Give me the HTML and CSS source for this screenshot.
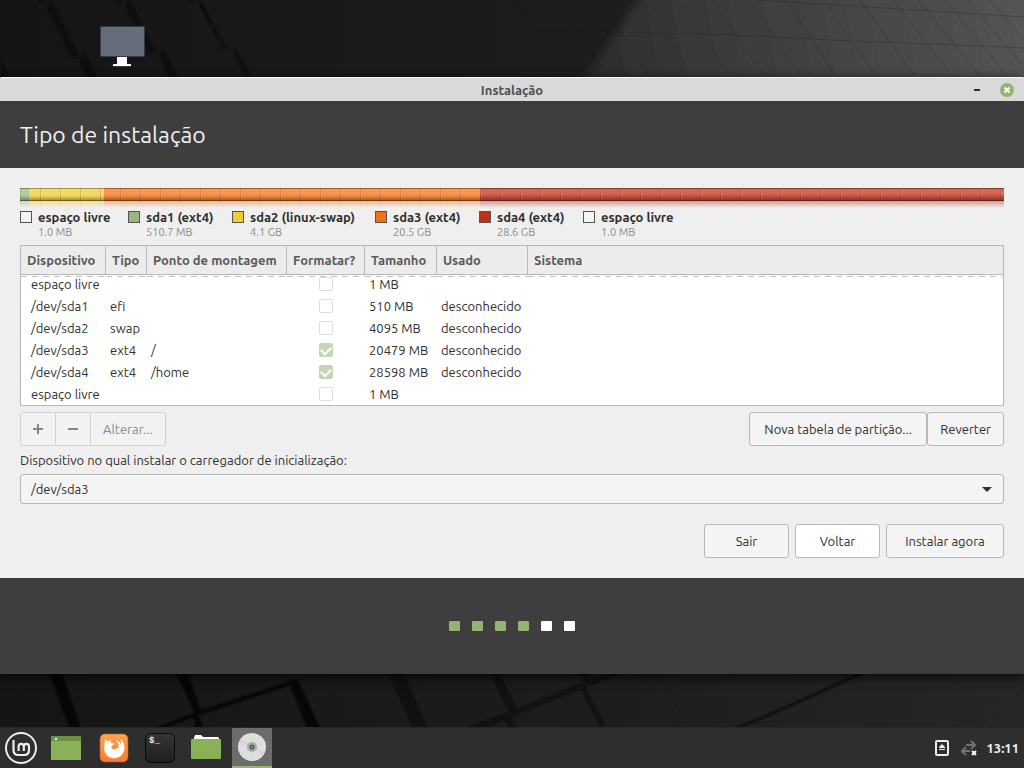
FILE: index.html
```html
<!DOCTYPE html>
<html lang="pt-BR">
<head>
<meta charset="utf-8">
<meta name="viewport" content="width=device-width, initial-scale=1">
<title>Instalação</title>
<link rel="stylesheet" href="styles.css">
</head>
<body>
<div class="desktop">
  <svg class="wallpaper" viewBox="0 0 1024 727" preserveAspectRatio="xMidYMid slice" aria-hidden="true">
    <defs>
      <linearGradient id="dark"><stop offset="0" stop-color="#151515"/><stop offset=".6" stop-color="#1d1d1d"/><stop offset="1" stop-color="#262626"/></linearGradient>
      <linearGradient id="light" x1="590" y1="77" x2="1024" y2="0" gradientUnits="userSpaceOnUse"><stop offset="0" stop-color="#2b2b2b"/><stop offset=".2" stop-color="#363636"/><stop offset="1" stop-color="#555"/></linearGradient>
      <filter id="soft"><feGaussianBlur stdDeviation="4"/></filter>
      <filter id="edge"><feGaussianBlur stdDeviation=".9"/></filter>
    </defs>
    <rect width="1024" height="768" fill="url(#dark)"/>
    <path d="M652-20 542 140V200H1080V-20Z" fill="url(#light)" filter="url(#soft)"/>
    <g fill="#080808" filter="url(#edge)">
      <path d="M38-2h5l3 5h-5ZM51 0 79 57H72L48 8ZM84 52 97 78H87L80 61ZM0 57 9 78H0ZM116-2h5l1 4h-4ZM129 0 156 53H149L126 6ZM163 49 178 78H170L160 55ZM188-2h4v4h-3ZM200 1 227 50H224L199 3ZM236 49 251 78H246L234 52Z"/>
      <path fill-opacity=".75" d="M48 670h13l20 58H69ZM174 670h13l14 41-5 4ZM193 715l5-2 5 15h-7ZM154 728l38-15 104-34 2 4-103 34-29 11ZM288 681l10-2 22 49H307Z"/>
      <path fill-opacity=".85" d="M388 670h13l26 58H413ZM489 670h8l19 38-7 3ZM504 716l6-2 6 14h-7ZM466 728l44-16 86-34 28-8-14 7-91 36-35 15ZM580 670h5l5 9-4 2ZM580 687l3-2 23 43h-4ZM735 728l67-29 62-28 8-1-69 31-62 27Z"/>
    </g>
    <g fill="none" stroke="#111" stroke-opacity=".22">
      <path d="M536 30 735 35 830 40 930 44 1024 48M755 0 900 9 1024 17M268 5 318 77M514 0 532 26M560 0 608 77M600 0 650 77M640 0 685 65M682 5 730 77M712 0 765 77M750 0 801 77M786 0 837 77M823 0 877 77M860 0 915 77M893 0 953 77M918 0 981 77M945 0 1008 77M968 0 1024 67M990 0 1024 40M658 677 690 728M955 727 1024 692M1010 675l14 18M982 715l8 12"/>
    </g>
  </svg>

  <div class="shelf">
    <svg class="computer" viewBox="0 0 48 44" role="img" aria-label="Computador">
      <rect x="1" y="1" width="45" height="31" rx="1" fill="#353a48"/>
      <rect x="2" y="2" width="43" height="29" fill="#666c7a"/>
      <path d="M18 32h10v7h4v2H14v-2h4Z" fill="#fff"/>
      <path d="M14 41.500h18" stroke="#353a48"/>
    </svg>
  </div>

  <main class="window">
    <header class="titlebar">
      <span class="title">Instalação</span>
      <button class="win-button" aria-label="Minimizar"><svg viewBox="0 0 16 16"><path d="M5 7h6v2H5Z" fill="#303030"/></svg></button>
      <button class="win-button" aria-label="Fechar"><svg viewBox="0 0 16 16"><circle cx="8" cy="8" r="7" fill="#92b372"/><path d="m5.500 5.500 5 5m0-5-5 5" stroke="#fff" stroke-width="2"/></svg></button>
    </header>
    <div class="heading"><h1>Tipo de instalação</h1></div>

    <section class="content">
      <div class="disk-bar">
        <i class="part green"></i><i class="part yellow"></i><i class="part orange"></i><i class="part red"></i>
      </div>
      <ul class="legend">
        <li><i class="swatch"></i><b>espaço livre</b><small>1.0 MB</small></li>
        <li><i class="swatch green"></i><b>sda1 (ext4)</b><small>510.7 MB</small></li>
        <li><i class="swatch yellow"></i><b>sda2 (linux-swap)</b><small>4.1 GB</small></li>
        <li><i class="swatch orange"></i><b>sda3 (ext4)</b><small>20.5 GB</small></li>
        <li><i class="swatch red"></i><b>sda4 (ext4)</b><small>28.6 GB</small></li>
        <li><i class="swatch"></i><b>espaço livre</b><small>1.0 MB</small></li>
      </ul>

      <div class="table-frame">
        <table>
          <colgroup><col class="c-device"><col class="c-type"><col class="c-mount"><col class="c-format"><col class="c-size"><col class="c-used"><col></colgroup>
          <thead><tr><th>Dispositivo</th><th>Tipo</th><th>Ponto de montagem</th><th>Formatar?</th><th>Tamanho</th><th>Usado</th><th>Sistema</th></tr></thead>
          <tbody>
            <tr><td>espaço livre</td><td></td><td></td><td><input type="checkbox" disabled aria-label="Formatar espaço livre"></td><td>1 MB</td><td></td><td></td></tr>
            <tr><td>/dev/sda1</td><td>efi</td><td></td><td><input type="checkbox" disabled aria-label="Formatar /dev/sda1"></td><td>510 MB</td><td>desconhecido</td><td></td></tr>
            <tr><td>/dev/sda2</td><td>swap</td><td></td><td><input type="checkbox" disabled aria-label="Formatar /dev/sda2"></td><td>4095 MB</td><td>desconhecido</td><td></td></tr>
            <tr><td>/dev/sda3</td><td>ext4</td><td>/</td><td><input type="checkbox" checked disabled aria-label="Formatar /dev/sda3"></td><td>20479 MB</td><td>desconhecido</td><td></td></tr>
            <tr><td>/dev/sda4</td><td>ext4</td><td>/home</td><td><input type="checkbox" checked disabled aria-label="Formatar /dev/sda4"></td><td>28598 MB</td><td>desconhecido</td><td></td></tr>
            <tr><td>espaço livre</td><td></td><td></td><td><input type="checkbox" disabled aria-label="Formatar espaço livre final"></td><td>1 MB</td><td></td><td></td></tr>
          </tbody>
        </table>
      </div>

      <div class="toolbar">
        <div class="linked">
          <button class="btn" disabled aria-label="Adicionar"><svg class="sign" viewBox="0 0 10 10"><path d="M0 5h10M5 0v10" stroke="#868686" stroke-width="2"/></svg></button>
          <button class="btn" disabled aria-label="Remover"><svg class="sign" viewBox="0 0 10 10"><path d="M0 5h10" stroke="#868686" stroke-width="2"/></svg></button>
          <button class="btn" disabled>Alterar...</button>
        </div>
        <div class="pair">
          <button class="btn">Nova tabela de partição...</button>
          <button class="btn">Reverter</button>
        </div>
      </div>

      <label class="boot-label" for="boot">Dispositivo no qual instalar o carregador de inicialização:</label>
      <div class="combo">
        <select id="boot"><option>/dev/sda3</option></select>
        <svg class="arrow" viewBox="0 0 10 5"><path d="M0 0h10L5 5Z" fill="#303030"/></svg>
      </div>

      <div class="actions">
        <button class="btn">Sair</button>
        <button class="btn active">Voltar</button>
        <button class="btn wide">Instalar agora</button>
      </div>
    </section>

    <footer class="progress"><i class="done"></i><i class="done"></i><i class="done"></i><i class="done"></i><i></i><i></i></footer>
  </main>
</div>

<nav class="panel">
  <button class="menu" aria-label="Menu"><svg viewBox="0 0 32 32" fill="none" stroke="#eee">
    <circle cx="16" cy="16" r="15" stroke-width="2"/>
    <path d="M8.500 8v10q0 5 5 5h5.500q5 0 5-5V14.500q0-2.700-2.600-2.700T18.800 14.500v4.500M18.800 14.500q0-2.700-2.600-2.700T13.600 14.500v4.500" stroke-width="2.200"/>
  </svg></button>
  <button class="launcher" aria-label="Mostrar área de trabalho"><svg viewBox="0 0 32 32"><path d="M1 4h30v24H1Z" fill="#8ab158"/><path d="M1 4h30v5H1Z" fill="#6b8f43"/><path d="M5 6h2v2H5Z" fill="#fff"/></svg></button>
  <button class="launcher" aria-label="Firefox"><svg viewBox="0 0 32 32">
    <defs><linearGradient id="fx" x2="0" y2="1"><stop stop-color="#ffa34f"/><stop offset="1" stop-color="#fb7b31"/></linearGradient></defs>
    <rect x="2" y="2" width="28" height="28" rx="5" fill="url(#fx)" stroke="#a9612b" stroke-width=".6"/>
    <path d="M7.500 6.800Q8 8.500 9.500 9.200L13.500 8.500Q12.500 9.700 12.800 11l3 .5q.7 1.200-2.300 2.500-.7 2 1 3 2.500.8 4.500-.8 2.200-1 1.500-4-.8-2.500-2.500-3.700Q22 9 22.500 12.500q1.500-3-1-6 3.500 1.500 4.200 5.500 2 5-.9 9.500Q21.500 26.300 16 26.300T7.500 21.500Q5.500 18 6.500 13 6.500 9.500 7.500 6.800Z" fill="#fff"/>
  </svg></button>
  <button class="launcher" aria-label="Terminal"><svg viewBox="0 0 32 32">
    <defs><linearGradient id="term" x2="0" y2="1"><stop stop-color="#353535"/><stop offset="1" stop-color="#1f1f1f"/></linearGradient></defs>
    <rect x="1.500" y="1.500" width="29" height="29" rx="5" fill="url(#term)" stroke="#080808"/>
    <text x="5" y="11" class="prompt">$_</text>
  </svg></button>
  <button class="launcher" aria-label="Arquivos"><svg viewBox="0 0 32 32"><path d="M4 8V5l1-1V3h6l2 2h15l1 1v3H4Z" fill="#fff"/><rect x="1" y="7" width="30" height="20" rx="1" fill="#8ab158"/></svg></button>
  <button class="launcher current" aria-label="Instalação"><svg viewBox="0 0 32 32">
    <circle cx="16" cy="15" r="14" fill="#dedede"/>
    <path d="M16 15 5 6.500 8 3.500ZM16 15 27 23.500 24 26.500Z" fill="#f6d6cf"/><path d="M16 15 3.200 10 5 6.500ZM16 15 28.800 20 27 23.500Z" fill="#cfd0f0"/><path d="M16 15 8 3.500 12 2ZM16 15 24 26.500 20 28Z" fill="#cbeed2"/>
    <circle cx="16" cy="15" r="5" fill="#aaa"/><circle cx="16" cy="15" r="2.500" fill="#5a5a5a"/><circle cx="16" cy="15" r="1" fill="#999"/>
  </svg></button>
  <div class="tray">
    <svg class="drive" viewBox="0 0 14 16"><rect x="1" y="1" width="12" height="14" rx="1" fill="none" stroke="#eee" stroke-width="2"/><path d="m7 4 3 3v1H4V7ZM4 9h6v1H4Z" fill="#eee"/></svg>
    <svg class="network" viewBox="0 0 16 16"><g fill="none" stroke="#737373" stroke-width="2"><path d="M5 5h8M2 11h7"/><path d="m10 1 4 4-4 4M5 7l-4 4 4 4"/></g><path d="m10 10 6 6m0-6-6 6" stroke="#2e2e2e" stroke-width="4"/><path d="m11 11 4 4m0-4-4 4" stroke="#fff" stroke-width="2"/></svg>
    <time>13:11</time>
  </div>
</nav>
</body>
</html>
```
FILE: styles.css
```css
* { box-sizing: border-box; }

body {
  margin: 0;
  min-height: 100vh;
  display: flex;
  flex-direction: column;
  background: #161616;
  color: #303030;
  font: 13px/20px "Ubuntu", "Noto Sans", sans-serif;
}

button, select, input { font: inherit; color: inherit; margin: 0; }
svg { display: block; }
i { display: block; }

.desktop { flex: 1; position: relative; overflow: hidden; padding-bottom: 53px; }
.wallpaper { position: absolute; inset: 0; width: 100%; height: 100%; }
.shelf { position: relative; padding: 25px 99px 8px; }
.computer { width: 48px; height: 44px; }

.window {
  position: relative;
  background: #efefef;
  border-radius: 2px 2px 0 0;
  box-shadow: 0 3px 12px rgba(0, 0, 0, .8);
}

.titlebar {
  display: grid;
  grid-template-columns: 1fr auto auto;
  align-items: center;
  gap: 14px;
  height: 24px;
  padding-right: 9px;
  background: #d9d9d9;
  border-top: 1px solid #f8f8f8;
  border-radius: 2px 2px 0 0;
}
.title { padding-left: 69px; text-align: center; font-weight: 700; color: #505050; }
.win-button { width: 16px; height: 16px; padding: 0; border: 0; background: none; }

.heading { padding: 19px 20px 18px; background: #3e3e3e; }
h1 { margin: 0; font-size: 23px; line-height: 30px; font-weight: 400; color: #efefef; }

.content { padding: 20px; }

.green { --c: #9ab87c; }
.yellow { --c: #edcc35; }
.orange { --c: #f37216; }
.red { --c: #c1301b; }

.disk-bar { display: flex; height: 21px; position: relative; }
.disk-bar::after {
  content: "";
  position: absolute;
  inset: 0;
  background:
    linear-gradient(to bottom, rgba(0,0,0,.3) 0 1px, rgba(255,255,255,.12) 1px, rgba(255,255,255,.16) 5px, rgba(0,0,0,0) 8px, rgba(0,0,0,.3) 12px, rgba(0,0,0,.55) 12px 13px, rgba(239,239,239,.45) 13px, #efefef 20px),
    repeating-linear-gradient(to right, rgba(0,0,0,.15) 0 1px, rgba(255,255,255,.12) 1px 2px, transparent 2px 20px);
}
.part { background: color-mix(in srgb, var(--c) 85%, white); }
.part.green { flex: 9; }
.part.yellow { flex: 75; }
.part.orange { flex: 376; }
.part.red { flex: 524; }

.legend {
  display: grid;
  grid-template-columns: 108px 104px 143px 104px 104px 1fr;
  margin: 0;
  padding: 0;
  list-style: none;
}
.legend li { display: grid; grid-template-columns: 12px 1fr; column-gap: 6px; align-items: center; white-space: nowrap; }
.legend b { line-height: 16px; }
.legend small { grid-column: 2; font-size: 11px; line-height: 14px; color: #8c8c8c; }
.swatch { width: 12px; height: 12px; border: 1px solid #555; background: var(--c, #f4f4f4); }

.table-frame { margin-top: 6px; border: 1px solid #b8b8b8; background: #fff; }
table { width: 100%; table-layout: fixed; border-collapse: separate; border-spacing: 0; }
.c-device { width: 85px; }
.c-type { width: 41px; }
.c-mount { width: 140px; }
.c-format { width: 78px; }
.c-size { width: 72px; }
.c-used { width: 91px; }
th {
  height: 29px;
  padding: 0 0 0 6px;
  border-right: 1px solid #b8b8b8;
  border-bottom: 1px solid #b8b8b8;
  background: #ececec;
  color: #5a5a5a;
  text-align: left;
  white-space: nowrap;
}
th:last-child { border-right: 0; }
td { height: 22px; padding: 0 0 0 4px; line-height: 18px; white-space: nowrap; }
td:first-child { padding-left: 10px; }
td:nth-child(4) { padding: 0; }
tbody tr:first-child td {
  height: 20px;
  padding-bottom: 2px;
  background: repeating-linear-gradient(to right, #c4c4c4 0 6px, transparent 6px 11px) 0 1px / 100% 1px no-repeat;
}
td input {
  appearance: none;
  display: grid;
  place-items: center;
  width: 14px;
  height: 14px;
  margin: 0 auto;
  border: 1px solid #dedede;
  border-radius: 2px;
  background: #fff;
}
td input:checked { border-color: #c5d5b4; background: #c5d5b4; }
td input:checked::after {
  content: "";
  width: 8px;
  height: 5px;
  margin-bottom: 2px;
  border: solid #fff;
  border-width: 0 0 2px 2px;
  transform: rotate(-45deg);
}

.toolbar { display: flex; justify-content: space-between; margin-top: 6px; }
.linked, .pair { display: flex; }
.btn {
  height: 34px;
  padding: 0 12px;
  border: 1px solid #b8b8b8;
  border-radius: 3px;
  background: #f4f4f4;
  white-space: nowrap;
}
.btn:disabled { border-color: #d2d2d2; background: #f2f2f2; color: #8c8c8c; }
.linked .btn + .btn { border-left: 0; }
.linked .btn { border-radius: 0; }
.linked .btn:first-child { border-radius: 3px 0 0 3px; }
.linked .btn:last-child { border-radius: 0 3px 3px 0; }
.pair .btn:first-child { min-width: 178px; }
.sign { width: 10px; height: 10px; }

.boot-label { display: block; margin: 4px 0; }
.combo { position: relative; }
.combo select {
  display: block;
  appearance: none;
  width: 100%;
  height: 30px;
  padding: 0 10px;
  border: 1px solid #b8b8b8;
  border-radius: 3px;
  background: #f4f4f4;
}
.arrow { position: absolute; right: 12px; top: 13px; width: 10px; height: 5px; pointer-events: none; }

.actions { display: flex; justify-content: flex-end; gap: 6px; margin-top: 20px; }
.actions .btn { min-width: 85px; }
.actions .wide { min-width: 118px; }
.actions .active { background: #fff; }

.progress { display: flex; justify-content: center; align-items: center; gap: 12px; height: 96px; background: #3e3e3e; }
.progress i { width: 11px; height: 10px; border-radius: 1px; background: #fff; }
.progress .done { background: #92b372; }

.panel { display: flex; height: 41px; background: #2e2e2e; border-top: 1px solid #272727; }
.panel button { display: grid; place-items: center; padding: 0; border: 0; background: none; }
.panel .menu { width: 42px; }
.panel .menu svg { width: 32px; height: 32px; }
.panel .launcher { width: 40px; margin-left: 6px; }
.panel .menu + .launcher { margin: 0 2px 0 4px; }
.panel .launcher svg { width: 32px; height: 32px; }
.panel .current { background: linear-gradient(to top, #92b372 2px, #6c6c6c 2px); }
.prompt { font: bold 9px "Liberation Mono", monospace; fill: #eee; }
.tray { display: flex; align-items: center; gap: 9px; margin-left: auto; padding-right: 5px; }
.drive { width: 14px; height: 16px; margin-right: 3px; }
.network { width: 16px; height: 16px; }
time { font-weight: 700; color: #efefef; }
```
